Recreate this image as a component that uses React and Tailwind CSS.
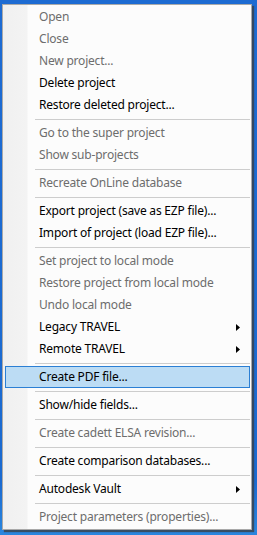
import React from "react";

const items = [
  { t: "Open", d: true },
  { t: "Close", d: true },
  { t: "New project...", d: true },
  { t: "Delete project" },
  { t: "Restore deleted project..." },
  "sep",
  { t: "Go to the super project", d: true },
  { t: "Show sub-projects", d: true },
  "sep",
  { t: "Recreate OnLine database", d: true },
  "sep",
  { t: "Export project (save as EZP file)..." },
  { t: "Import of project (load EZP file)..." },
  "sep",
  { t: "Set project to local mode", d: true },
  { t: "Restore project from local mode", d: true },
  { t: "Undo local mode", d: true },
  { t: "Legacy TRAVEL", sub: true },
  { t: "Remote TRAVEL", sub: true },
  "sep",
  { t: "Create PDF file...", hl: true },
  "sep",
  { t: "Show/hide fields..." },
  "sep",
  { t: "Create cadett ELSA revision...", d: true },
  "sep",
  { t: "Create comparison databases..." },
  "sep",
  { t: "Autodesk Vault", sub: true },
  "sep",
  { t: "Project parameters (properties)...", d: true },
];

function Arrow() {
  return (
    <svg width="4" height="7" viewBox="0 0 4 7" className="ml-auto mr-[9px] shrink-0">
      <path d="M0 0 L4 3.5 L0 7 Z" fill="#000" />
    </svg>
  );
}

export default function App() {
  return (
    <div
      className="w-[257px] h-[535px] overflow-hidden flex items-start pl-[2px] pt-[4px] bg-[linear-gradient(to_bottom,#1d6bd2,#1b6ad0_90%,#2a86de)]"
      style={{ fontFamily: '"Noto Sans", "Open Sans", sans-serif' }}
    >
      <div className="w-[250px] h-[526px] shrink-0 border border-[#a9a9a9] py-px pl-[2px] bg-[linear-gradient(to_right,#f0f0f0_0,#f3f3f3_24px,#fcfcfc_25px)] shadow-[2px_2px_1px_rgba(60,60,60,0.75)] flex flex-col">
        {items.map((it, i) =>
          it === "sep" ? (
            <div key={i} className="h-[6px] shrink-0 flex items-center pl-[30px] pr-px">
              <div className="h-px w-full bg-[#cdcdcd]" />
            </div>
          ) : (
            <div
              key={i}
              className={
                "h-[22px] shrink-0 flex items-center pl-[33px] text-[12px] leading-none tracking-[-0.2px] mr-px " +
                (it.hl ? "bg-[#bcdcf4] border border-[#2b7fd4] " : "border border-transparent ") +
                (it.d ? "text-[#6d6d6d]" : "text-black")
              }
            >
              <span className="whitespace-nowrap">{it.t}</span>
              {it.sub && <Arrow />}
            </div>
          )
        )}
      </div>
    </div>
  );
}
